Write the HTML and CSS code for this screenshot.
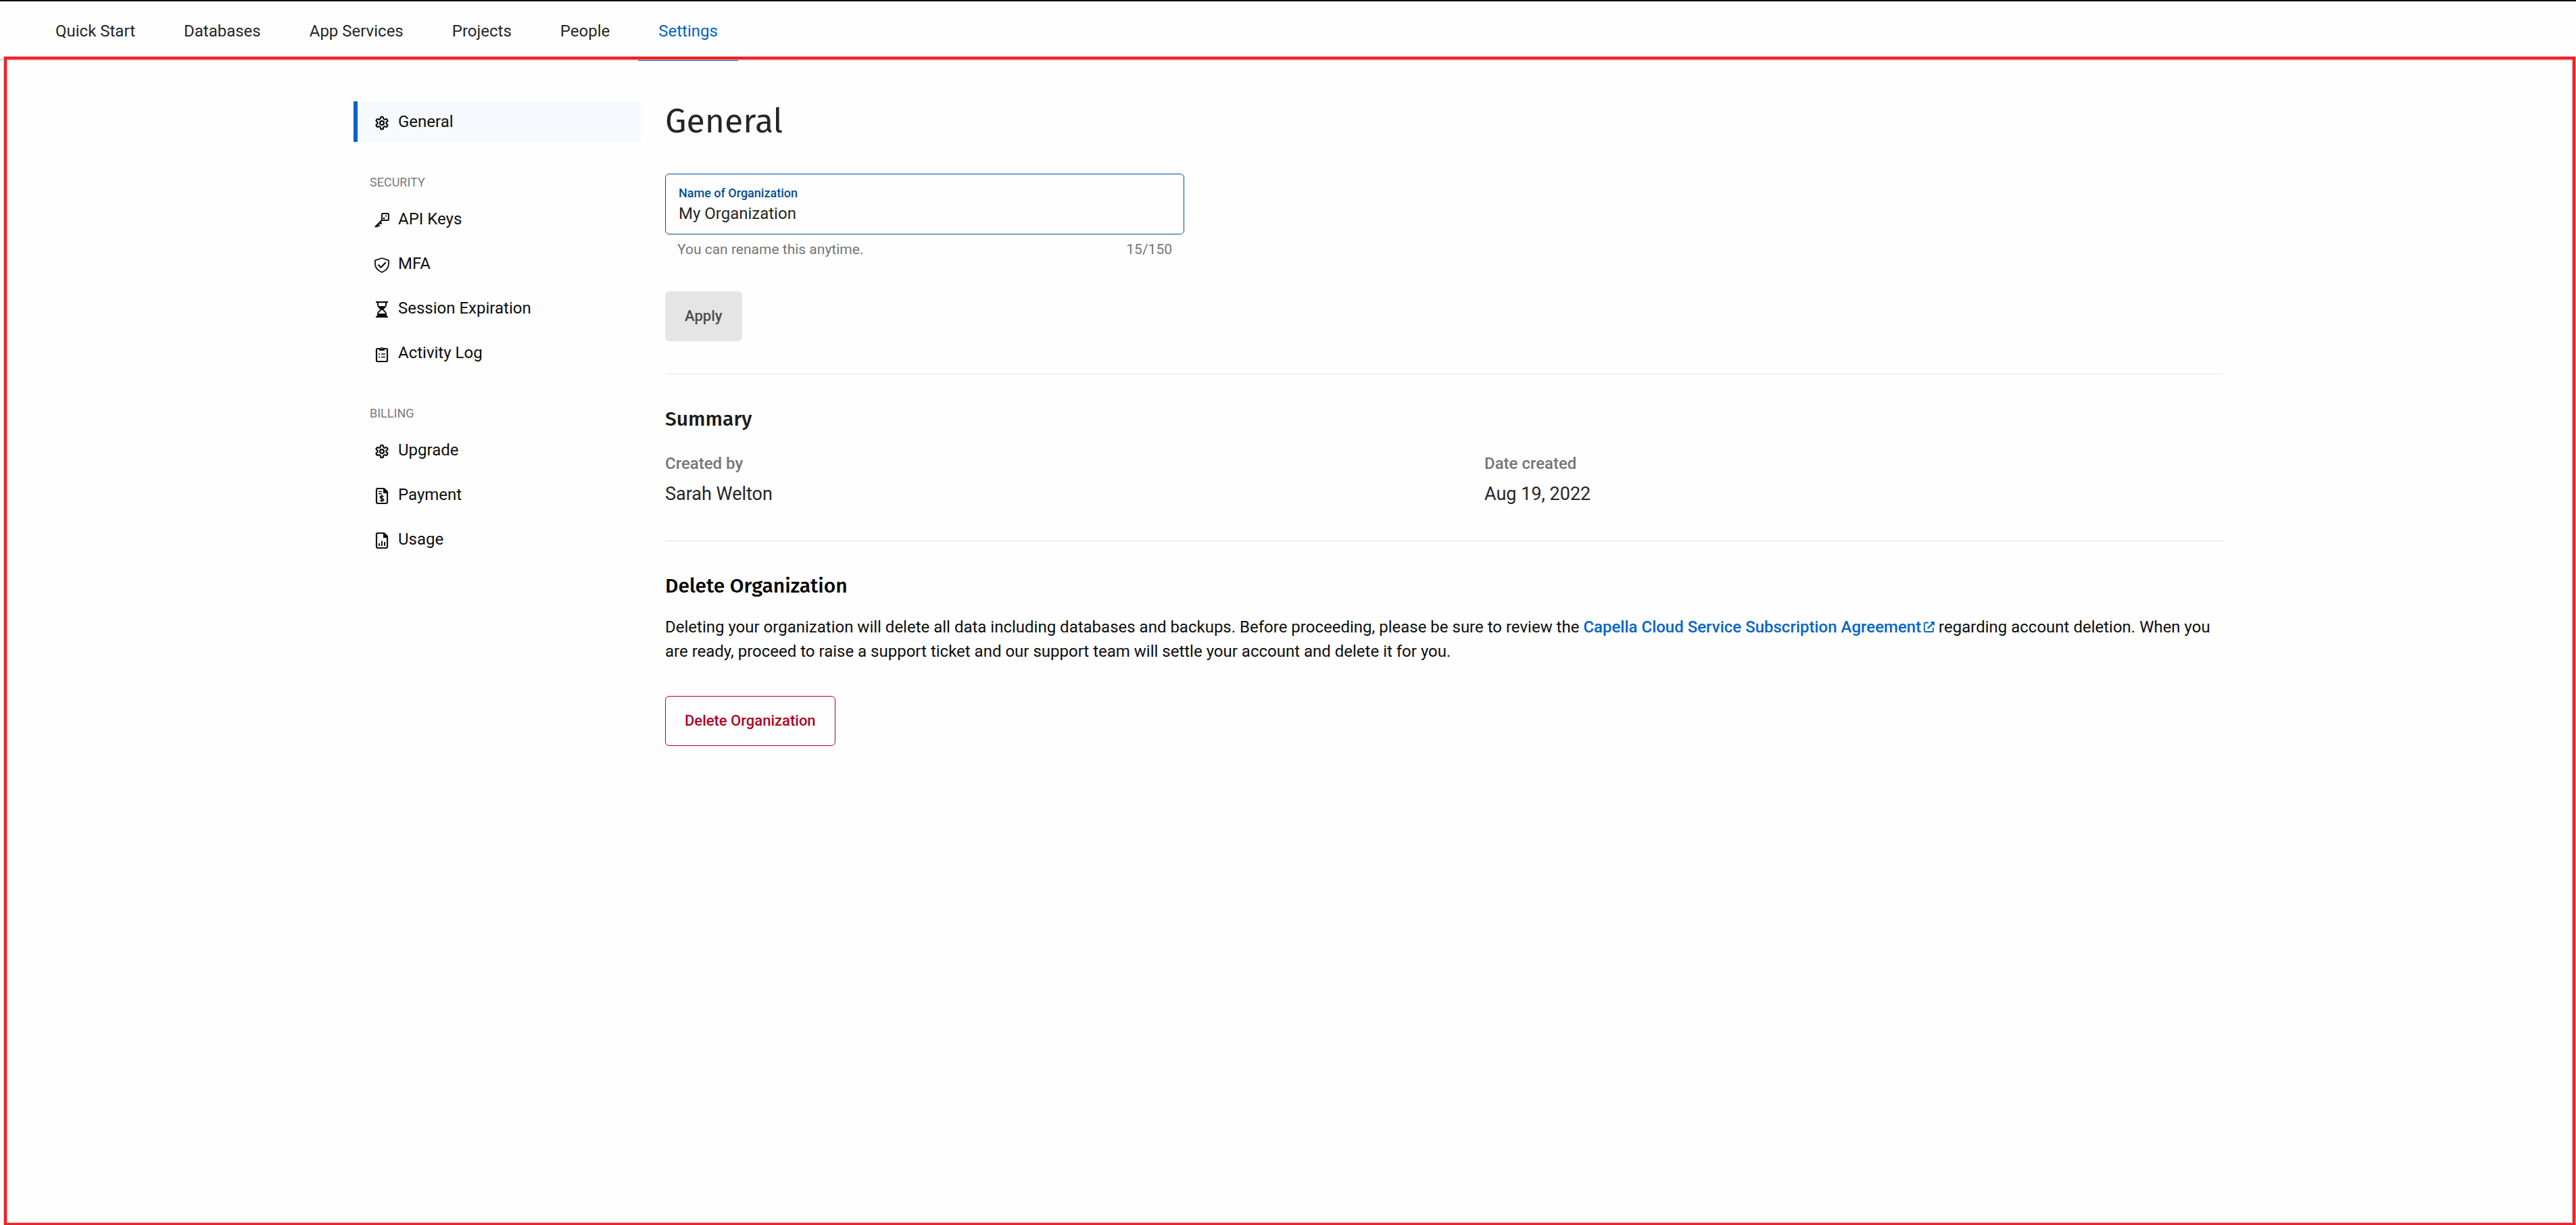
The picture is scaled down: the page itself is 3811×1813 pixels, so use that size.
FILE: index.html
```html
<!DOCTYPE html>
<html lang="en">
<head>
  <meta charset="utf-8">
  <meta name="viewport" content="width=device-width, initial-scale=1">
  <title>Organization settings</title>
  <link rel="stylesheet" href="styles.css">
</head>
<body>
  <svg class="sprite" aria-hidden="true">
    <symbol id="gear" viewBox="-1 -1 26 26">
      <g fill="none" stroke="currentColor" stroke-width="2.4" stroke-linejoin="round">
        <path d="M12.22 2h-.44a2 2 0 0 0-2 2v.18a2 2 0 0 1-1 1.73l-.43.25a2 2 0 0 1-2 0l-.15-.08a2 2 0 0 0-2.73.73l-.22.38a2 2 0 0 0 .73 2.73l.15.1a2 2 0 0 1 1 1.72v.51a2 2 0 0 1-1 1.74l-.15.09a2 2 0 0 0-.73 2.73l.22.38a2 2 0 0 0 2.73.73l.15-.08a2 2 0 0 1 2 0l.43.25a2 2 0 0 1 1 1.73V20a2 2 0 0 0 2 2h.44a2 2 0 0 0 2-2v-.18a2 2 0 0 1 1-1.73l.43-.25a2 2 0 0 1 2 0l.15.08a2 2 0 0 0 2.73-.73l.22-.39a2 2 0 0 0-.73-2.73l-.15-.08a2 2 0 0 1-1-1.74v-.5a2 2 0 0 1 1-1.74l.15-.09a2 2 0 0 0 .73-2.73l-.22-.38a2 2 0 0 0-2.73-.73l-.15.08a2 2 0 0 1-2 0l-.43-.25a2 2 0 0 1-1-1.73V4a2 2 0 0 0-2-2z"/>
        <circle cx="12" cy="12" r="3.2"/>
      </g>
    </symbol>
    <symbol id="key" viewBox="0 0 24 24">
      <rect x="11.9" y="1.9" width="10" height="10" rx="1.5" fill="none" stroke="currentColor" stroke-width="2"/>
      <circle cx="15" cy="9" r="1.4" fill="currentColor"/>
      <circle cx="18.2" cy="5.6" r="1.1" fill="currentColor"/>
      <path d="M12 12L2 22M8.5 15l3 2.5M6 18l2.6 2.8M4 20l2 2" fill="none" stroke="currentColor" stroke-width="2.4"/>
    </symbol>
    <symbol id="shield" viewBox="0 0 24 24">
      <path d="M12 2L22 5.3V10.5C22 16.5 18.3 20.3 12 23C5.7 20.3 2 16.5 2 10.5V5.3Z" fill="none" stroke="currentColor" stroke-width="1.8" stroke-linejoin="round"/>
      <path d="M7.2 12.4L10.6 15.7L17.2 9" fill="none" stroke="currentColor" stroke-width="2.2" stroke-linecap="round" stroke-linejoin="round"/>
    </symbol>
    <symbol id="hourglass" viewBox="0 0 24 24">
      <path d="M3 1h18M3 23h18" stroke="currentColor" stroke-width="2.4"/>
      <path d="M6 2v3.5C6 9 9.500 10 11 12C9.500 14 6 15 6 18.500V22M18 2v3.5C18 9 14.500 10 13 12C14.500 14 18 15 18 18.500V22" fill="none" stroke="currentColor" stroke-width="2"/>
      <path d="M6.500 7h11C16.500 9.500 14.500 10.500 12.800 12.500h-1.600C9.500 10.500 7.500 9.500 6.500 7zM5 22v-4h14V22z" fill="currentColor"/>
    </symbol>
    <symbol id="clipboard" viewBox="0 0 24 24">
      <rect x="4" y="4" width="16" height="19" rx="1.5" fill="none" stroke="currentColor" stroke-width="2.2"/>
      <path d="M8 7V3.500h1.800a2.300 2.300 0 0 1 4.400 0H16V7z" fill="currentColor"/>
      <circle cx="12" cy="3.6" r=".8" fill="#fefefe"/>
      <path d="M7 12h2M11 12h6M7 16.500h2M11 16.500h6" stroke="currentColor" stroke-width="1.6"/>
    </symbol>
    <symbol id="invoice" viewBox="0 0 24 24">
      <path d="M6 1h9l5 5v15a2 2 0 0 1-2 2H6a2 2 0 0 1-2-2V3a2 2 0 0 1 2-2z" fill="none" stroke="currentColor" stroke-width="2.2"/>
      <path d="M14 1h2.500L21 5.500V8h-7z" fill="currentColor"/>
      <path d="M7 5.500h5M7 8.700h5" stroke="currentColor" stroke-width="1.4"/>
      <path d="M14.500 13.200c-.5-.9-1.500-1.100-2.500-1.100-1.500 0-2.500.6-2.500 1.800 0 2.400 5.200 1.300 5.200 3.600 0 1.200-1.100 1.800-2.700 1.800-1.200 0-2.200-.3-2.800-1.200M12 10.500v10.300" fill="none" stroke="currentColor" stroke-width="1.7"/>
    </symbol>
    <symbol id="report" viewBox="0 0 24 24">
      <path d="M6 1h9l5 5v15a2 2 0 0 1-2 2H6a2 2 0 0 1-2-2V3a2 2 0 0 1 2-2z" fill="none" stroke="currentColor" stroke-width="2.2"/>
      <path d="M14 1h2.500L21 5.500V8h-7z" fill="currentColor"/>
      <path d="M8 20v-4M12 20v-7.500M16 20v-6" stroke="currentColor" stroke-width="1.9"/>
    </symbol>
    <symbol id="external" viewBox="0 0 16 16">
      <path d="M7 1.500H2.500a1.500 1.500 0 0 0-1.500 1.500v10.500A1.500 1.500 0 0 0 2.500 15h10a1.500 1.500 0 0 0 1.500-1.500V9" fill="none" stroke="currentColor" stroke-width="1.8"/>
      <path d="M5.800 10.200L13 3" stroke="currentColor" stroke-width="2.4"/>
      <path d="M9.500 0H16v6.500z" fill="currentColor"/>
    </symbol>
  </svg>

  <header class="topbar">
    <nav class="tabs" aria-label="Main">
      <a class="tab" href="#">Quick Start</a>
      <a class="tab" href="#">Databases</a>
      <a class="tab" href="#">App Services</a>
      <a class="tab" href="#">Projects</a>
      <a class="tab" href="#">People</a>
      <a class="tab tab-active" href="#" aria-current="page">Settings</a>
    </nav>
  </header>

  <div class="page">
    <nav class="sidebar" aria-label="Settings">
      <ul class="menu">
        <li><a class="menu-item menu-item-active" href="#" aria-current="page"><svg class="icon"><use href="#gear"/></svg>General</a></li>
      </ul>
      <h2 class="menu-title">SECURITY</h2>
      <ul class="menu">
        <li><a class="menu-item" href="#"><svg class="icon"><use href="#key"/></svg>API Keys</a></li>
        <li><a class="menu-item" href="#"><svg class="icon"><use href="#shield"/></svg>MFA</a></li>
        <li><a class="menu-item" href="#"><svg class="icon"><use href="#hourglass"/></svg>Session Expiration</a></li>
        <li><a class="menu-item" href="#"><svg class="icon"><use href="#clipboard"/></svg>Activity Log</a></li>
      </ul>
      <h2 class="menu-title">BILLING</h2>
      <ul class="menu">
        <li><a class="menu-item" href="#"><svg class="icon"><use href="#gear"/></svg>Upgrade</a></li>
        <li><a class="menu-item" href="#"><svg class="icon"><use href="#invoice"/></svg>Payment</a></li>
        <li><a class="menu-item" href="#"><svg class="icon"><use href="#report"/></svg>Usage</a></li>
      </ul>
    </nav>

    <main class="content">
      <section class="section">
        <h1 class="title">General</h1>
        <form class="form">
          <div class="field">
            <label class="field-label" for="org-name">Name of Organization</label>
            <input class="field-input" id="org-name" type="text" value="My Organization" maxlength="150" aria-describedby="org-hint">
          </div>
          <div class="field-notes">
            <span id="org-hint">You can rename this anytime.</span>
            <span>15/150</span>
          </div>
          <button class="button button-apply" type="submit" disabled>Apply</button>
        </form>
      </section>

      <section class="section">
        <h2 class="heading">Summary</h2>
        <dl class="facts">
          <div class="fact">
            <dt>Created by</dt>
            <dd>Sarah Welton</dd>
          </div>
          <div class="fact">
            <dt>Date created</dt>
            <dd>Aug 19, 2022</dd>
          </div>
        </dl>
      </section>

      <section class="section section-delete">
        <h2 class="heading">Delete Organization</h2>
        <p class="text">Deleting your organization will delete all data including databases and backups. Before proceeding, please be sure to review the <a class="link" href="#">Capella Cloud Service Subscription Agreement<svg class="link-icon" aria-hidden="true"><use href="#external"/></svg></a> regarding account deletion. When you are ready, proceed to raise a support ticket and our support team will settle your account and delete it for you.</p>
        <button class="button button-danger" type="button">Delete Organization</button>
      </section>
    </main>
  </div>

  <div class="highlight" aria-hidden="true"></div>
</body>
</html>
```

FILE: styles.css
```css
* {
  box-sizing: border-box;
}

body {
  margin: 0;
  min-height: 100vh;
  background: #fefefe;
  color: #0d0d0d;
  font-family: Roboto, "Liberation Sans", sans-serif;
  font-size: 24px;
  line-height: 36px;
}

.sprite {
  display: none;
}

/* Top navigation */
.topbar {
  border-top: 2px solid #000;
  padding: 0 52px;
  box-shadow: inset 0 -3px #e1e1e1;
}

.tabs {
  display: flex;
  gap: 12px;
}

.tab {
  padding: 0 30px;
  line-height: 88px;
  color: #262626;
  text-decoration: none;
}

.tab-active {
  color: #0064c8;
  box-shadow: inset 0 -3px #0056b8;
}

/* Page columns */
.page {
  display: flex;
  align-items: flex-start;
  gap: 36px;
  width: 100%;
  max-width: 2765px;
  margin: 0 auto;
  padding: 60px 0;
}

.sidebar {
  flex: 0 0 425px;
}

.content {
  flex: 1;
  min-width: 0;
}

/* Settings menu */
.menu {
  display: flex;
  flex-direction: column;
  gap: 6px;
  margin: 0;
  padding: 0;
  list-style: none;
}

.menu-item {
  display: flex;
  align-items: center;
  gap: 12px;
  height: 60px;
  padding-left: 24px;
  border-left: 6px solid transparent;
  color: #0d0d0d;
  text-decoration: none;
}

.menu-item-active {
  border-left-color: #0064c8;
  background: #f6faff;
}

.menu-title {
  margin: 48px 0 12px;
  padding-left: 24px;
  color: #7a7a7a;
  font-size: 18px;
  font-weight: 400;
  line-height: 24px;
}

.icon {
  width: 24px;
  height: 24px;
  margin-top: 4px;
}

/* Content sections */
.section {
  padding-bottom: 48px;
}

.section + .section {
  border-top: 1px solid #e1e1e1;
  padding-top: 48px;
}

.title,
.heading {
  margin: 0;
  font-family: "Fira Sans", "Noto Sans", sans-serif;
}

.title {
  margin-bottom: 49px;
  color: #262626;
  font-size: 50px;
  font-weight: 400;
  line-height: 58px;
}

.heading {
  color: #1a1a1a;
  font-size: 30px;
  font-weight: 500;
  line-height: 37px;
}

.form {
  max-width: 768px;
}

.field {
  display: flex;
  flex-direction: column;
  padding: 15px 19px 13px;
  border: 1px solid #004d96;
  border-radius: 6px;
}

.field-label {
  color: #004d96;
  font-size: 18px;
  font-weight: 500;
  line-height: 26px;
}

.field-input {
  width: 100%;
  height: 34px;
  padding: 0;
  border: 0;
  outline: 0;
  background: none;
  color: #262626;
  font: inherit;
}

.field-notes {
  display: flex;
  justify-content: space-between;
  margin: 8px 0 48px;
  padding: 0 18px;
  color: #757575;
  font-size: 21px;
  line-height: 28px;
}

.button {
  height: 74px;
  padding: 0 28px;
  border: 1px solid;
  border-radius: 6px;
  font: inherit;
  font-size: 22px;
  font-weight: 500;
}

.button-apply {
  border-color: #e5e5e5;
  background: #e5e5e5;
  color: #4d4d4d;
}

.button-danger {
  border-color: #af0024;
  background: none;
  color: #af0024;
}

.facts {
  display: grid;
  grid-template-columns: 1fr 1fr;
  gap: 120px;
  margin: 29px 0 2px;
}

.fact {
  display: flex;
  flex-direction: column;
  gap: 8px;
}

.fact dt {
  color: #757575;
  font-weight: 500;
}

.fact dd {
  margin: 0;
  color: #262626;
  font-size: 27px;
  line-height: 38px;
}

.section-delete .heading {
  color: #000;
}

.text {
  margin: 24px 0 48px;
}

.link {
  color: #0064c8;
  font-weight: 500;
  text-decoration: none;
}

.link-icon {
  width: 16px;
  height: 16px;
  margin-left: 4px;
}

/* Frame drawn over the settings area */
.highlight {
  position: fixed;
  inset: 84px 1px -1px 6px;
  border: 4px solid #ed2228;
  box-shadow: 0 0 0 1px #f5b5b8, inset 0 0 0 1px #f5b5b8;
  pointer-events: none;
}
```
